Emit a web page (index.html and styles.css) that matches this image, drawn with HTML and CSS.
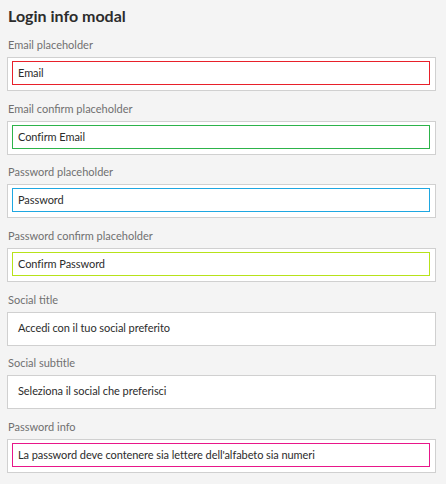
FILE: index.html
```html
<!DOCTYPE html>
<html lang="it">
<head>
<meta charset="utf-8">
<title>Login info modal</title>
<link rel="stylesheet" href="styles.css">
</head>
<body>
<main class="panel">
  <h1 class="title">Login info modal</h1>
  <div class="field">
    <label class="label">Email placeholder</label>
    <div class="box"><div class="input red">Email</div></div>
  </div>
  <div class="field">
    <label class="label">Email confirm placeholder</label>
    <div class="box"><div class="input green">Confirm Email</div></div>
  </div>
  <div class="field">
    <label class="label">Password placeholder</label>
    <div class="box"><div class="input blue">Password</div></div>
  </div>
  <div class="field">
    <label class="label">Password confirm placeholder</label>
    <div class="box"><div class="input lime">Confirm Password</div></div>
  </div>
  <div class="field">
    <label class="label">Social title</label>
    <div class="box"><div class="input">Accedi con il tuo social preferito</div></div>
  </div>
  <div class="field">
    <label class="label">Social subtitle</label>
    <div class="box"><div class="input">Seleziona il social che preferisci</div></div>
  </div>
  <div class="field">
    <label class="label">Password info</label>
    <div class="box"><div class="input pink">La password deve contenere sia lettere dell'alfabeto sia numeri</div></div>
  </div>
</main>
</body>
</html>
```
FILE: styles.css
```css
html, body {
  margin: 0;
  padding: 0;
  background: #f4f4f4;
}
body {
  font-family: "Lato", "Noto Sans", sans-serif;
  color: #2c2c2c;
}
.panel {
  display: flex;
  flex-direction: column;
  padding: 0 10px 0 7px;
}
.title {
  margin: 6px 0 11px 1px;
  font-size: 16px;
  line-height: 20px;
  font-weight: 700;
  color: #2c2c2c;
}
.field {
  display: flex;
  flex-direction: column;
  margin-bottom: 9.67px;
}
.label {
  display: block;
  margin: 0 0 4px 1px;
  font-size: 11px;
  line-height: 16px;
  color: #707070;
}
.box {
  background: #fff;
  border: 1px solid #d0d0d0;
  padding: 3px 5px 5px 4px;
}
.input {
  height: 22px;
  border: 1px solid transparent;
  padding: 0 5px;
  font-size: 11px;
  letter-spacing: -0.07px;
  line-height: 22px;
  color: #2c2c2c;
  white-space: nowrap;
}
.red { border-color: #e8202a; }
.green { border-color: #2db34a; }
.blue { border-color: #1ea7e1; }
.lime { border-color: #b7e21a; }
.pink { border-color: #e8168a; }
```
